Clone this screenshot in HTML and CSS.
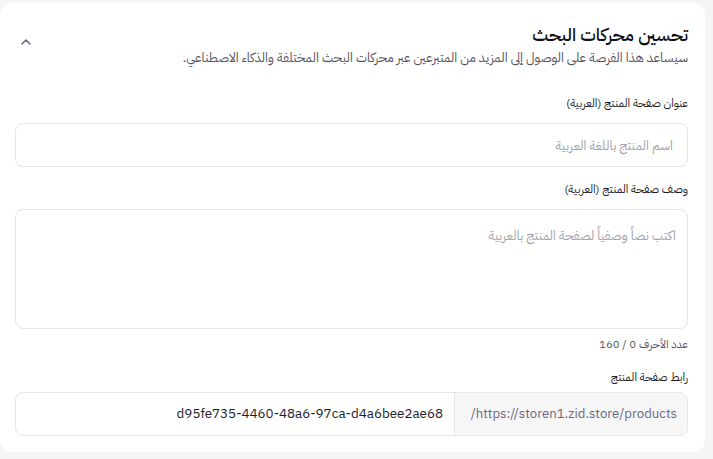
FILE: index.html
```html
<!DOCTYPE html>
<html lang="ar" dir="rtl">
<head>
    <meta charset="UTF-8">
    <title>SEO</title>
    <link rel="stylesheet" href="styles.css">
</head>
<body>
   <div class="card">
       <div class="card-head">
           <div class="head-text">
               <h2 class="title">تحسين محركات البحث</h2>
               <p class="subtitle">سيساعد هذا الفرصة على الوصول إلى المزيد من المتبرعين عبر محركات البحث المختلفة والذكاء الاصطناعي.</p>
           </div>
           <button class="toggle" type="button">
               <svg width="14" height="14" viewBox="0 0 14 14"><path d="M3 9 L7 5 L11 9" fill="none" stroke="#6e6a86" stroke-width="1.6" stroke-linecap="round" stroke-linejoin="round"/></svg>
           </button>
       </div>

       <div class="field">
           <label class="label">عنوان صفحة المنتج (العربية)</label>
           <input class="input" type="text" placeholder="اسم المنتج باللغة العربية">
       </div>

       <div class="field">
           <label class="label">وصف صفحة المنتج (العربية)</label>
           <textarea class="input area" placeholder="اكتب نصاً وصفياً لصفحة المنتج بالعربية"></textarea>
           <div class="counter">عدد الأحرف 0 / 160</div>
       </div>

       <div class="field field-url">
           <label class="label">رابط صفحة المنتج</label>
           <div class="url-group">
               <span class="url-prefix">https://storen1.zid.store/products/</span>
               <span class="url-value" dir="ltr">d95fe735-4460-48a6-97ca-d4a6bee2ae68</span>
           </div>
       </div>
   </div>
</body>
</html>
```

FILE: styles.css
```css
*{
    padding: 0;
    margin: 0;
    box-sizing: border-box;
    font-family: "IBM Plex Sans Arabic", Inter, "DejaVu Sans", sans-serif;
}
html, body{
    width: 100%;
    height: 100%;
}
body{
    background-color: #f5f5f7;
    padding: 3px 8px 0 0;
}
.card{
    width: 705px;
    height: 449px;
    background-color: #fff;
    border-radius: 12px;
    padding: 19px 17px 16px 15px;
}
.card-head{
    display: flex;
    justify-content: space-between;
    align-items: center;
}
.title{
    font-size: 18px;
    line-height: 26px;
    font-weight: 500;
    color: #0e0e1a;
}
.subtitle{
    font-size: 13px;
    line-height: 20px;
    color: #55545e;
}
.toggle{
    border: none;
    background: none;
    width: 14px;
    height: 14px;
    margin-left: 4px;
    margin-top: -6px;
}
.field{
    margin-top: 27px;
}
.field + .field{
    margin-top: 14px;
}
.label{
    display: block;
    font-size: 11.5px;
    line-height: 18px;
    color: #1d1c26;
    margin-bottom: 10px;
}
.input{
    display: block;
    width: 100%;
    height: 44px;
    border: 1px solid #e6e6ea;
    border-radius: 8px;
    padding: 0 14px;
    font-size: 13px;
    background: #fff;
    outline: none;
}
.input::placeholder{
    color: #a3a2ab;
}
.area{
    height: 120px;
    padding: 16px 11px;
    resize: none;
}
.counter{
    font-size: 11.4px;
    line-height: 16px;
    color: #55545e;
    margin-top: 8px;
}
.field-url .label{
    margin-bottom: 5px;
}
.field + .field-url{
    margin-top: 16px;
}
.url-group{
    display: flex;
    height: 44px;
    border: 1px solid #e6e6ea;
    border-radius: 8px;
    overflow: hidden;
}
.url-prefix{
    width: 233px;
    background-color: #f6f6f7;
    border-left: 1px solid #e6e6ea;
    color: #6b6880;
    font-size: 13.2px;
    line-height: 42px;
    padding-right: 10px;
}
.url-value{
    flex: 1;
    font-size: 13.4px;
    line-height: 42px;
    color: #1d1c26;
    text-align: right;
    padding-right: 11px;
}
```
